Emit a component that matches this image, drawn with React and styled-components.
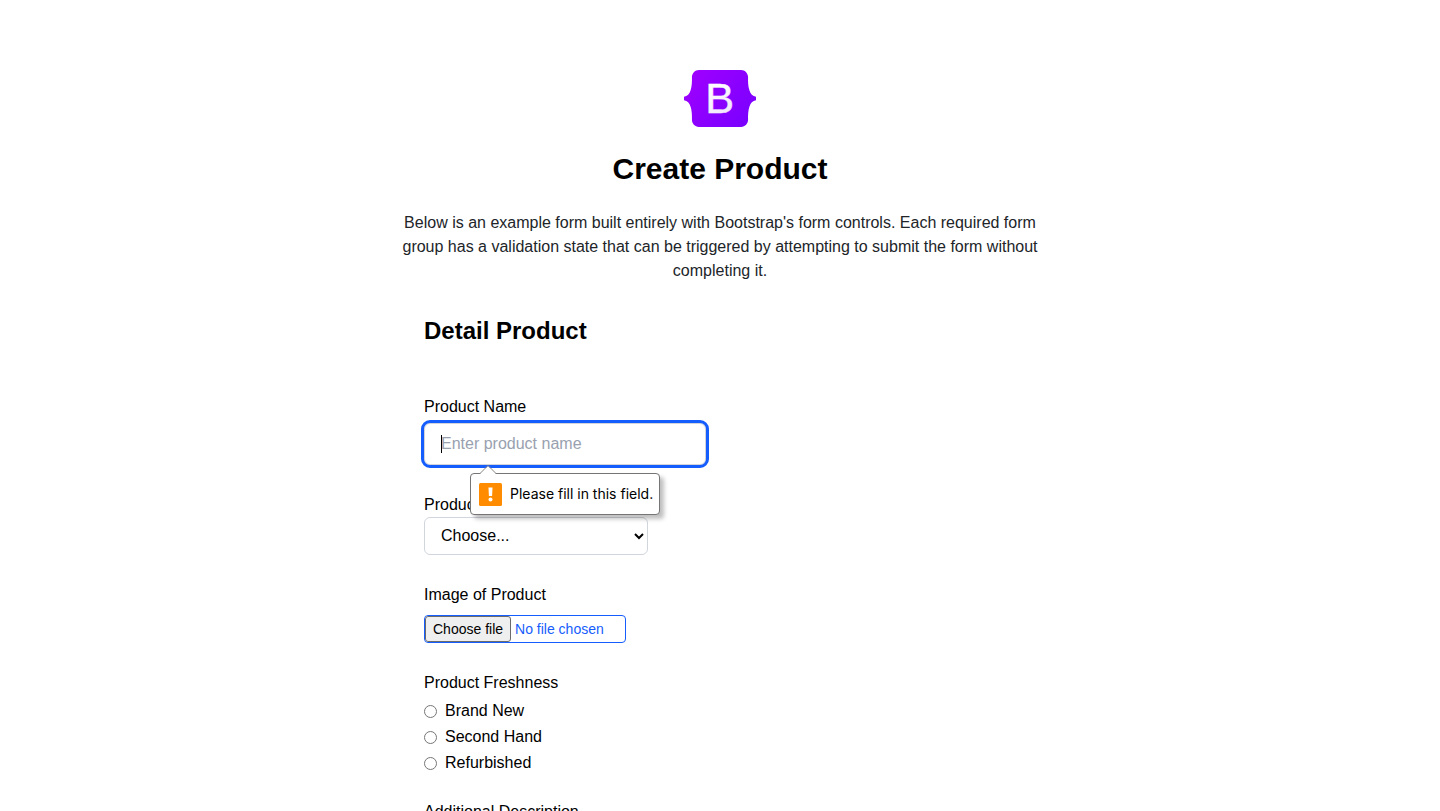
import React, { useState } from "react";
import styled, { createGlobalStyle } from "styled-components";

const GlobalStyle = createGlobalStyle`
  *, *::before, *::after { box-sizing: border-box; }
  html { scrollbar-width: none; }
  body {
    margin: 0;
    background: #fff;
    color: #000;
    font-family: Helvetica, "Liberation Sans", Arial, sans-serif;
    font-size: 16px;
    line-height: 24px;
  }
`;

const Page = styled.main`
  max-width: 640px;
  margin: 0 auto;
  padding: 70px 0 48px;
`;

const Header = styled.header`
  display: flex;
  flex-direction: column;
  align-items: center;
  gap: 24px;
  text-align: center;
`;

const Logo = styled.svg`
  display: block;
  width: 72px;
  height: 57px;
`;

const Title = styled.h1`
  margin: 0;
  font-size: 30px;
  line-height: 36px;
  font-weight: 700;
`;

const Intro = styled.p`
  margin: 0;
  color: #212529;
`;

const Form = styled.form`
  display: flex;
  flex-direction: column;
  align-items: flex-start;
  gap: 24px;
  padding: 32px 24px 0;
`;

const SectionTitle = styled.h2`
  margin: 0 0 24px;
  font-size: 24px;
  line-height: 32px;
  font-weight: 700;
`;

const Field = styled.div`
  display: flex;
  flex-direction: column;
  align-items: flex-start;
  gap: ${(p) => p.$gap}px;
  margin-bottom: 4px;
`;

const Label = styled.label`
  display: block;
`;

const InputWrap = styled.div`
  position: relative;
  &::before {
    content: "";
    position: absolute;
    left: 17px;
    top: 12px;
    width: 1px;
    height: 18px;
    background: #000;
  }
`;

const TextInput = styled.input`
  display: block;
  width: 282px;
  max-width: 100%;
  height: 42px;
  padding: 8px 16px;
  border: 1px solid #d1d5db;
  border-radius: 6px;
  outline: 3px solid #155dfc;
  background: #fff;
  font: inherit;
  caret-color: transparent;
  &::placeholder { color: #99a1af; opacity: 1; }
`;

const Tooltip = styled.div`
  position: absolute;
  z-index: 1;
  left: 46px;
  top: 50px;
  display: flex;
  align-items: center;
  gap: 8px;
  height: 42px;
  padding: 0 6px 0 8px;
  border: 1px solid #757575;
  border-radius: 4px;
  background: #fff;
  box-shadow: 4px 4px 4px rgba(0, 0, 0, 0.25);
  font: 14px/20px Inter, sans-serif;
  white-space: nowrap;
`;

const Pointer = styled.svg`
  position: absolute;
  left: 8px;
  top: -9px;
  width: 18px;
  height: 9px;
`;

const WarningIcon = styled.svg`
  width: 23px;
  height: 23px;
`;

const Select = styled.select`
  width: 224px;
  height: 38px;
  padding: 0 0 2px 12px;
  border: 1px solid #d1d5dc;
  border-radius: 6px;
  background: #fff;
  color: #000;
  font: inherit;
`;

const FilePicker = styled.div`
  position: relative;
  display: flex;
  align-items: center;
  gap: 4px;
  width: 202px;
  height: 28px;
  border: 1px solid #155dfc;
  border-radius: 4px;
  color: #155dfc;
  font-size: 14px;
  line-height: 20px;
  white-space: nowrap;
  overflow: hidden;
`;

const FileInput = styled.input`
  position: absolute;
  inset: 0;
  width: 100%;
  height: 100%;
  opacity: 0;
`;

const FileButton = styled.span`
  padding: 2px 7px;
  border: 1px solid #6b6b6b;
  border-radius: 3px;
  background: #efefef;
  color: #000;
`;

const RadioGroup = styled.fieldset`
  min-width: 0;
  margin: 0;
  padding: 0;
  border: 0;
`;

const Legend = styled.legend`
  padding: 0;
  margin-bottom: 3px;
`;

const RadioRow = styled.label`
  display: flex;
  align-items: center;
  gap: 8px;
  height: 26px;
`;

const Radio = styled.input`
  width: 13px;
  height: 13px;
  margin: 0;
`;

const Textarea = styled.textarea`
  display: block;
  width: 282px;
  height: 96px;
  padding: 8px 16px;
  border: 1px solid #d1d5dc;
  border-radius: 6px;
  font: inherit;
`;

function BrandLogo() {
  return (
    <Logo viewBox="0 0 512 408" preserveAspectRatio="none" role="img" aria-label="Bootstrap">
      <defs>
        <linearGradient id="shell" x1="76" y1="11" x2="480" y2="366" gradientUnits="userSpaceOnUse">
          <stop stopColor="#9d00ff" />
          <stop offset="1" stopColor="#7a00ff" />
        </linearGradient>
        <linearGradient id="letter" x1="193" y1="110" x2="294" y2="315" gradientUnits="userSpaceOnUse">
          <stop stopColor="#fff" />
          <stop offset="1" stopColor="#f1e5fc" />
        </linearGradient>
      </defs>
      <path
        fill="url(#shell)"
        d="M56.481 53.32C55.515 25.58 77.128 0 106.342 0h299.353c29.214 0 50.827 25.58 49.861 53.32-.928 26.65.277 61.165 8.964 89.31 8.715 28.232 23.411 46.077 47.48 48.37v26c-24.069 2.293-38.765 20.138-47.48 48.37-8.687 28.145-9.892 62.66-8.964 89.31.966 27.74-20.647 53.32-49.861 53.32H106.342c-29.214 0-50.827-25.58-49.86-53.32.927-26.65-.278-61.165-8.966-89.31C38.802 237.138 24.07 219.293 0 217v-26c24.069-2.293 38.802-20.138 47.516-48.37 8.688-28.145 9.893-62.66 8.965-89.31z"
      />
      <text
        x="151"
        y="311"
        fontFamily="Liberation Sans, Arial, sans-serif"
        fontSize="308"
        fill="url(#letter)"
        stroke="url(#letter)"
        strokeWidth="3"
      >
        B
      </text>
    </Logo>
  );
}

function ValidationTip() {
  return (
    <Tooltip role="alert">
      <Pointer viewBox="0 0 18 9" aria-hidden="true">
        <path d="M1 9L9 1l8 8z" fill="#fff" />
        <path d="M1 8.500L9 .5l8 8" fill="none" stroke="#858585" />
      </Pointer>
      <WarningIcon viewBox="0 0 23 23" aria-hidden="true">
        <rect width="23" height="23" rx="1.500" fill="#ff8c00" />
        <path d="M9.500 4.500h4l-.4 8.500h-3.200z" fill="#fff" />
        <circle cx="11.500" cy="16.500" r="2" fill="#fff" />
      </WarningIcon>
      <span>Please fill in this field.</span>
    </Tooltip>
  );
}

function FileField({ id }) {
  const [fileName, setFileName] = useState("No file chosen");
  const handleChange = (event) => {
    const file = event.target.files[0];
    setFileName(file ? file.name : "No file chosen");
  };
  return (
    <FilePicker>
      <FileButton aria-hidden="true">Choose file</FileButton>
      <span>{fileName}</span>
      <FileInput id={id} type="file" onChange={handleChange} />
    </FilePicker>
  );
}

const conditions = ["Brand New", "Second Hand", "Refurbished"];

export default function App() {
  return (
    <>
      <GlobalStyle />
      <Page>
        <Header>
          <BrandLogo />
          <Title>Create Product</Title>
          <Intro>
            Below is an example form built entirely with Bootstrap's form controls. Each required form
            group has a validation state that can be triggered by attempting to submit the form without
            completing it.
          </Intro>
        </Header>
        <Form noValidate>
          <SectionTitle>Detail Product</SectionTitle>
          <Field $gap={4}>
            <Label htmlFor="name">Product Name</Label>
            <InputWrap>
              <TextInput id="name" type="text" placeholder="Enter product name" required />
              <ValidationTip />
            </InputWrap>
          </Field>
          <Field $gap={0}>
            <Label htmlFor="category">Product</Label>
            <Select id="category" required>
              <option>Choose...</option>
            </Select>
          </Field>
          <Field $gap={8}>
            <Label htmlFor="image">Image of Product</Label>
            <FileField id="image" />
          </Field>
          <RadioGroup>
            <Legend>Product Freshness</Legend>
            {conditions.map((name) => (
              <RadioRow key={name}>
                <Radio type="radio" name="freshness" value={name} />
                {name}
              </RadioRow>
            ))}
          </RadioGroup>
          <Field $gap={4}>
            <Label htmlFor="description">Additional Description</Label>
            <Textarea id="description" />
          </Field>
        </Form>
      </Page>
    </>
  );
}
